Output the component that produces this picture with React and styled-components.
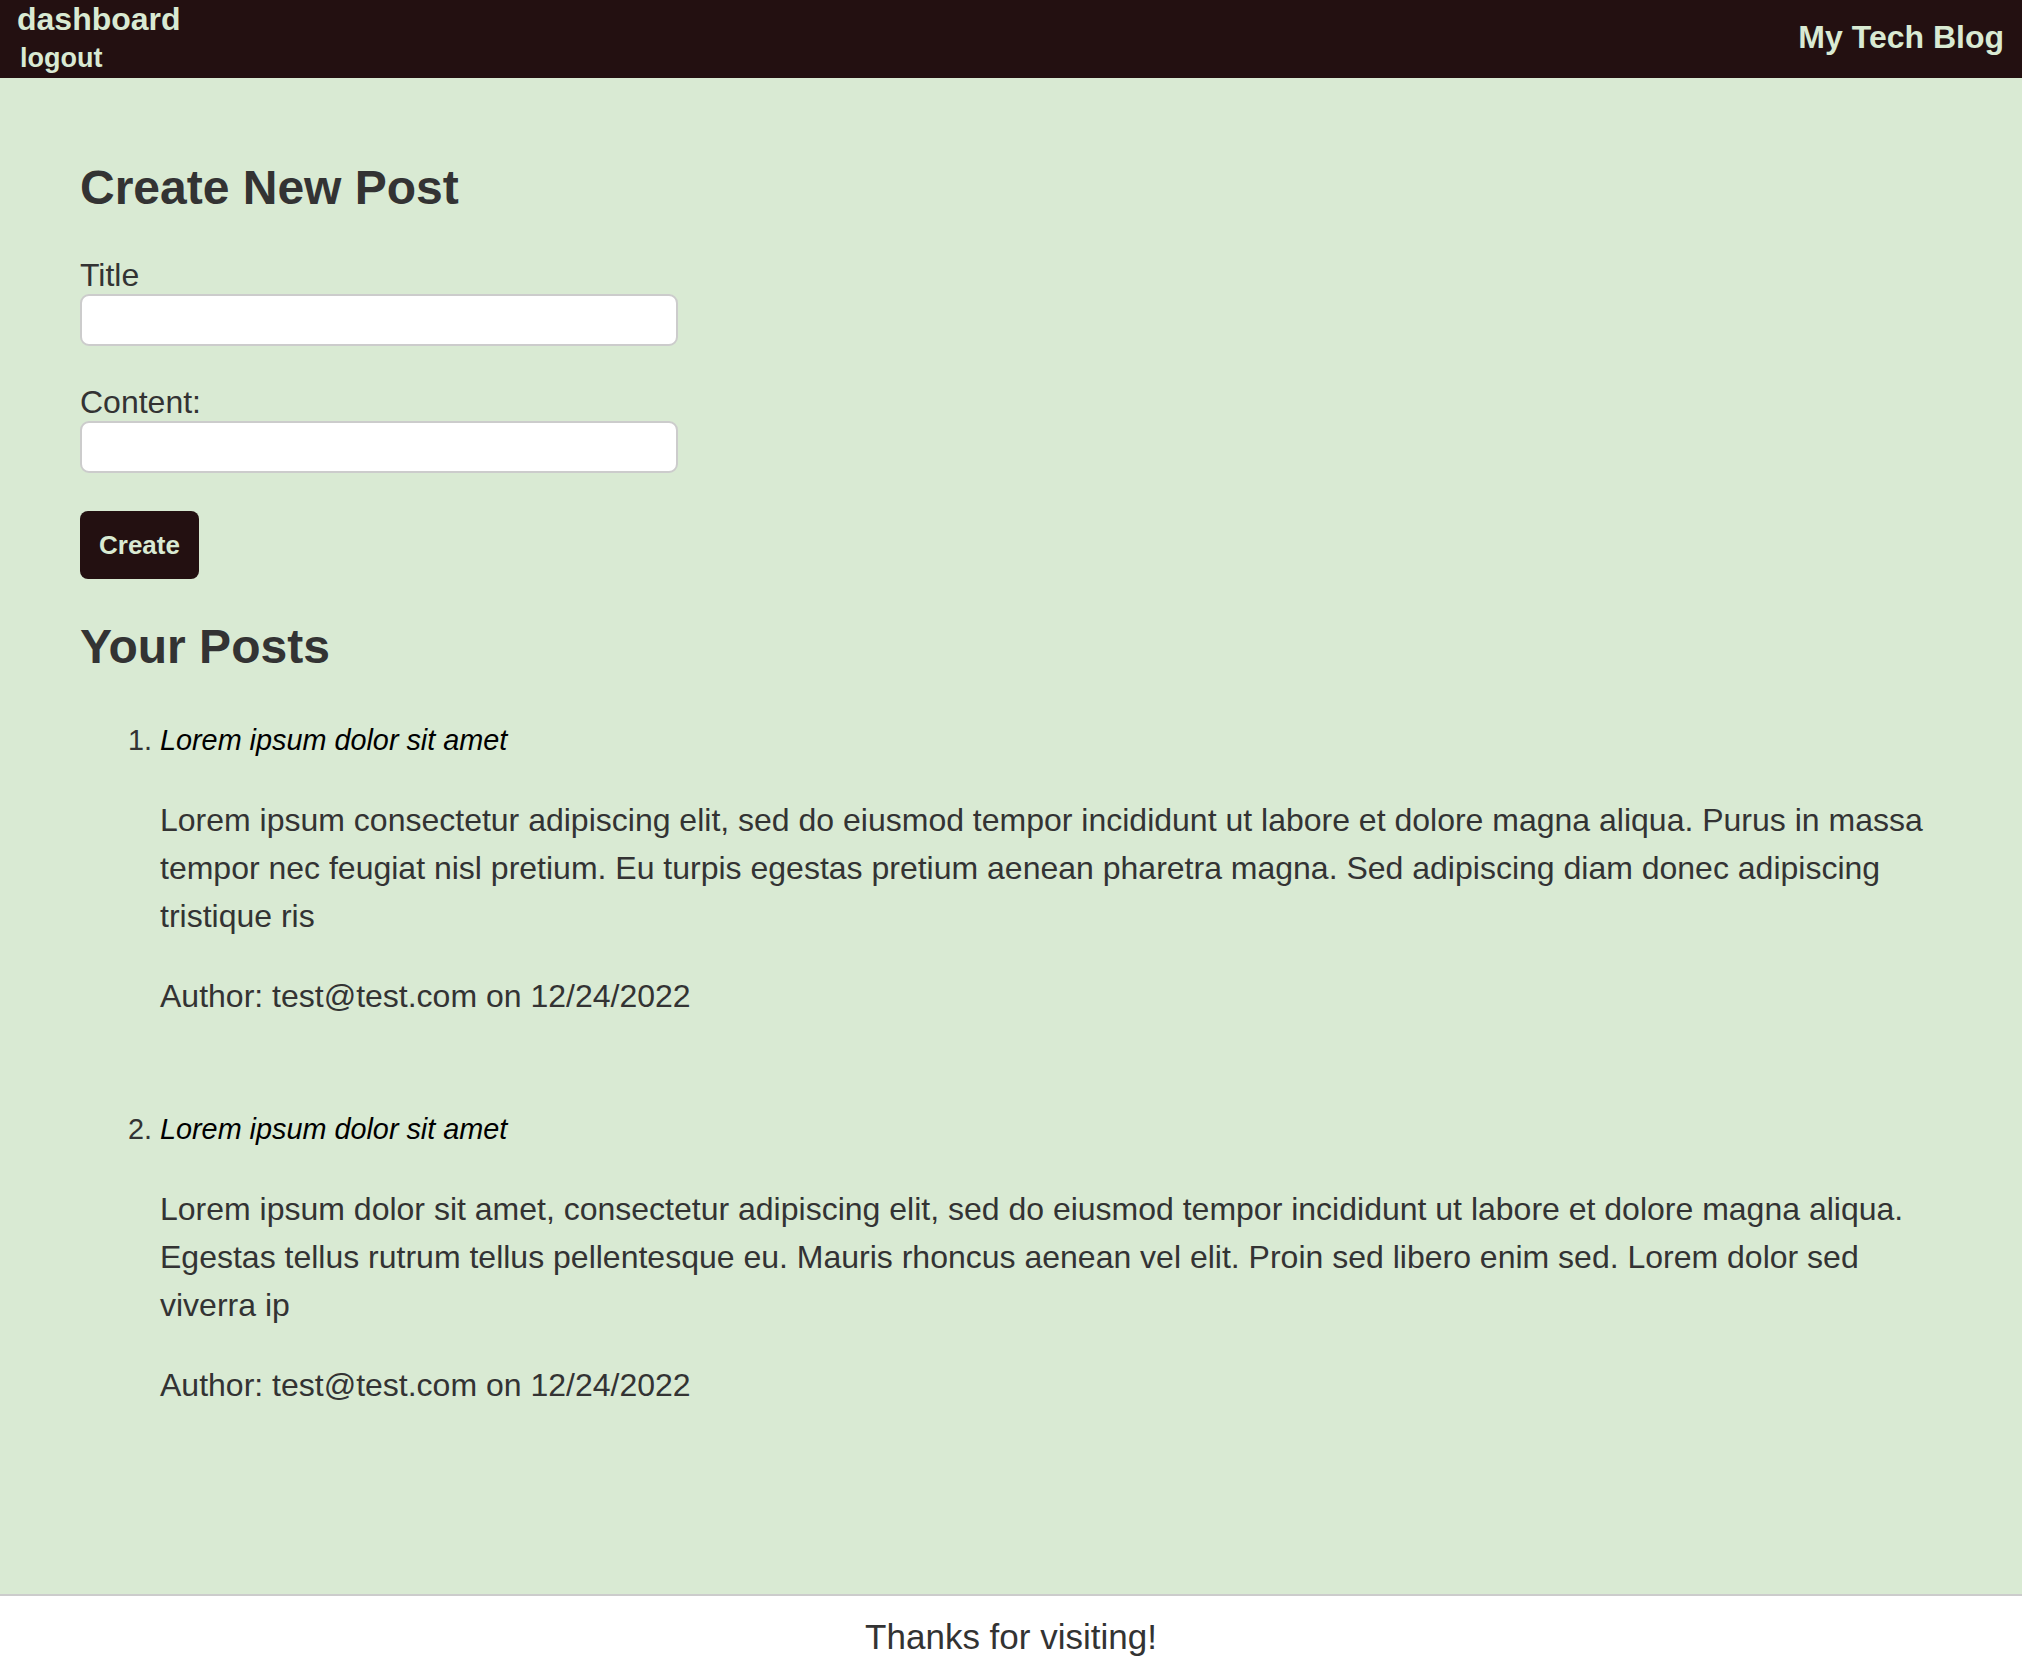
import React from "react";
import styled, { createGlobalStyle } from "styled-components";

const GlobalStyle = createGlobalStyle`
  html, body {
    margin: 0;
    padding: 0;
  }
  body {
    font-family: "Liberation Sans", Arial, Helvetica, sans-serif;
    color: #333;
    background: #fff;
  }
`;

const Page = styled.div`
  display: flex;
  flex-direction: column;
  min-height: 100vh;
`;

const TopBar = styled.header`
  display: flex;
  justify-content: space-between;
  align-items: flex-start;
  height: 78px;
  box-sizing: border-box;
  padding: 1px 18px 0 17px;
  background: #231011;
  color: #d9ead3;
  font-weight: bold;
`;

const NavLinks = styled.nav`
  display: flex;
  flex-direction: column;
`;

const NavLink = styled.a`
  color: inherit;
  text-decoration: none;
  font-size: ${(p) => (p.$small ? "27px" : "32px")};
  line-height: ${(p) => (p.$small ? "31px" : "37px")};
  margin-left: ${(p) => (p.$small ? "3px" : "0")};
  margin-top: ${(p) => (p.$small ? "5px" : "0")};
`;

const Brand = styled.h1`
  margin: 0;
  align-self: center;
  font-size: 32px;
  line-height: 37px;
  font-weight: bold;
  padding-bottom: 4px;
`;

const Main = styled.main`
  flex: 1;
  background: #d9ead3;
  padding: 42px 80px 40px;
`;

const Heading = styled.h2`
  margin: 40px 0 42px;
  font-size: 48px;
  line-height: 55px;
  font-weight: bold;
  color: #333;
`;

const Form = styled.form`
  display: flex;
  flex-direction: column;
  align-items: flex-start;
`;

const Field = styled.div`
  display: flex;
  flex-direction: column;
  margin-bottom: 38px;
`;

const Label = styled.label`
  font-size: 32px;
  line-height: 37px;
  color: #333;
`;

const Input = styled.input`
  width: 598px;
  height: 52px;
  box-sizing: border-box;
  border: 2px solid #cccccc;
  border-radius: 9px;
  background: #fff;
  font-size: 28px;
  padding: 0 12px;
  outline: none;
`;

const Button = styled.button`
  height: 68px;
  padding: 0 19px;
  border: none;
  border-radius: 8px;
  background: #231011;
  color: #d9ead3;
  font-family: inherit;
  font-size: 26px;
  font-weight: bold;
  cursor: pointer;
`;

const PostList = styled.ol`
  margin: 0;
  padding-left: 80px;
`;

const Post = styled.li`
  font-size: 28.8px;
  line-height: 48px;
  color: #333;
  margin-bottom: 85px;
`;

const PostTitle = styled.em`
  color: #000;
`;

const PostText = styled.p`
  font-size: 32px;
  line-height: 48px;
  margin: 32px 0;
  color: #333;
`;

const Footer = styled.footer`
  border-top: 2px solid #cccccc;
  background: #fff;
  text-align: center;
  font-size: 35px;
  line-height: 40px;
  padding: 21px 0 11px;
  color: #333;
`;

const posts = [
  {
    title: "Lorem ipsum dolor sit amet",
    body:
      "Lorem ipsum consectetur adipiscing elit, sed do eiusmod tempor incididunt ut labore et dolore magna aliqua. Purus in massa tempor nec feugiat nisl pretium. Eu turpis egestas pretium aenean pharetra magna. Sed adipiscing diam donec adipiscing tristique ris",
    author: "test@test.com",
    date: "12/24/2022",
  },
  {
    title: "Lorem ipsum dolor sit amet",
    body:
      "Lorem ipsum dolor sit amet, consectetur adipiscing elit, sed do eiusmod tempor incididunt ut labore et dolore magna aliqua. Egestas tellus rutrum tellus pellentesque eu. Mauris rhoncus aenean vel elit. Proin sed libero enim sed. Lorem dolor sed viverra ip",
    author: "test@test.com",
    date: "12/24/2022",
  },
];

export default function App() {
  return (
    <Page>
      <GlobalStyle />
      <TopBar>
        <NavLinks>
          <NavLink href="#">dashboard</NavLink>
          <NavLink href="#" $small>
            logout
          </NavLink>
        </NavLinks>
        <Brand>My Tech Blog</Brand>
      </TopBar>

      <Main>
        <Heading>Create New Post</Heading>
        <Form onSubmit={(e) => e.preventDefault()}>
          <Field>
            <Label htmlFor="post-title">Title</Label>
            <Input id="post-title" type="text" />
          </Field>
          <Field>
            <Label htmlFor="post-content">Content:</Label>
            <Input id="post-content" type="text" />
          </Field>
          <Button type="submit">Create</Button>
        </Form>

        <Heading>Your Posts</Heading>
        <PostList>
          {posts.map((post, i) => (
            <Post key={i}>
              <PostTitle>{post.title}</PostTitle>
              <PostText>{post.body}</PostText>
              <PostText>
                Author: {post.author} on {post.date}
              </PostText>
            </Post>
          ))}
        </PostList>
      </Main>

      <Footer>Thanks for visiting!</Footer>
    </Page>
  );
}
